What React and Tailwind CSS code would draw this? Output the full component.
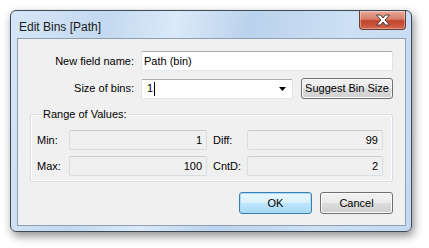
import React from "react";

function TextBox({ className, children }) {
  return (
    <div
      className={
        "flex items-center h-[20px] bg-white border border-[#e2e3ea] border-t-[#abadb3] border-b-[#e3e9ef] rounded-[2px] " +
        className
      }
    >
      {children}
    </div>
  );
}

function ReadOnly({ value, className }) {
  return (
    <div
      className={
        "flex items-center justify-end h-[20px] pr-[4px] bg-[#f0f0f0] border border-[#d9dde2] border-t-[#c9ccd1] rounded-[2px] " +
        className
      }
    >
      {value}
    </div>
  );
}

function Button({ children, className, primary }) {
  return (
    <div
      className={
        "flex items-center justify-center whitespace-nowrap rounded-[3px] border " +
        (primary
          ? "border-[#3c7fb1] shadow-[inset_0_0_0_1px_#a8dcf8] bg-[linear-gradient(#eaf6fd_0%,#d9f0fc_50%,#bee6fd_50%,#a7d9f5_100%)] "
          : "border-[#707070] shadow-[inset_0_0_0_1px_#fcfcfc] bg-[linear-gradient(#f2f2f2_0%,#ebebeb_50%,#dddddd_50%,#cfcfcf_100%)] ") +
        className
      }
    >
      {children}
    </div>
  );
}

function CloseGlyph() {
  return (
    <svg width="16" height="12" viewBox="0 0 16 12">
      <path
        d="M1.5 1 H5.5 L8 4 L10.5 1 H14.5 L10 6 L14.5 11 H10.5 L8 8 L5.5 11 H1.5 L6 6 Z"
        fill="#ffffff"
        stroke="#4a3a3a"
        strokeWidth="1"
        strokeLinejoin="round"
      />
    </svg>
  );
}

export default function App() {
  return (
    <div
      className="w-[429px] h-[248px] bg-white pt-[10px] pl-[10px] text-[11px] text-[#000] whitespace-nowrap overflow-hidden"
      style={{ fontFamily: '"Liberation Sans", Arial, sans-serif' }}
    >
      <div className="w-[402px] h-[222px] rounded-[6px] border border-[#3f4a57] shadow-[2px_4px_10px_rgba(0,0,0,0.45)] bg-[linear-gradient(100deg,#d6e6f7_0%,#c3d9f0_22%,#dbe9f8_38%,#bad2ec_55%,#cde0f4_78%,#c4daf1_100%)] flex flex-col overflow-hidden">
        {/* title bar */}
        <div className="flex h-[27px] shrink-0">
          <div className="pl-[8px] pt-[7px] text-[12px] text-[#1a1a1a]">Edit Bins [Path]</div>
          <div className="ml-auto mr-[5px] w-[47px] h-[19px] rounded-b-[4px] border border-t-0 border-[#6b3b30] bg-[linear-gradient(#e9a99a_0%,#d47f6b_45%,#c2432a_55%,#d0654d_100%)] shadow-[inset_0_0_0_1px_rgba(255,255,255,0.35)] flex items-center justify-center">
            <CloseGlyph />
          </div>
        </div>

        {/* client area */}
        <div className="ml-[6px] mr-[5px] w-[389px] h-[188px] border border-[#8d9fb5] bg-[#f0f0f0] px-[12px] pt-[12px]">
          <div className="flex items-center">
            <div className="w-[111px] text-right pr-[7px]">New field name:</div>
            <TextBox className="w-[252px] pl-[2px]">Path (bin)</TextBox>
          </div>

          <div className="flex items-center mt-[7px]">
            <div className="w-[111px] text-right pr-[7px]">Size of bins:</div>
            <TextBox className="w-[152px] pl-[5px]">
              <span>1</span>
              <span className="w-px h-[14px] bg-black ml-[1px]"></span>
              <svg className="ml-auto mr-[5px]" width="8" height="4" viewBox="0 0 8 4">
                <path d="M0 0 H7 L3.5 4 Z" fill="#000" />
              </svg>
            </TextBox>
            <Button className="ml-[8px] w-[92px] h-[21px]">Suggest Bin Size</Button>
          </div>

          <fieldset className="mt-[8px] w-[363px] h-[75px] border border-[#d5dfe5] rounded-[3px] px-[6px] shadow-[inset_0_0_0_1px_#ffffff]">
            <legend className="ml-[4px] px-[2px] leading-[14px]">Range of Values:</legend>
            <div className="flex items-center mt-[9px]">
              <div className="w-[32px]">Min:</div>
              <ReadOnly value="1" className="w-[138px]" />
              <div className="w-[40px] pl-[6px]">Diff:</div>
              <ReadOnly value="99" className="w-[136px]" />
            </div>
            <div className="flex items-center mt-[6px]">
              <div className="w-[32px]">Max:</div>
              <ReadOnly value="100" className="w-[138px]" />
              <div className="w-[40px] pl-[6px]">CntD:</div>
              <ReadOnly value="2" className="w-[136px]" />
            </div>
          </fieldset>

          <div className="flex justify-end gap-[8px] mt-[10px]">
            <Button primary className="w-[73px] h-[22px]">OK</Button>
            <Button className="w-[73px] h-[22px]">Cancel</Button>
          </div>
        </div>
      </div>
    </div>
  );
}
